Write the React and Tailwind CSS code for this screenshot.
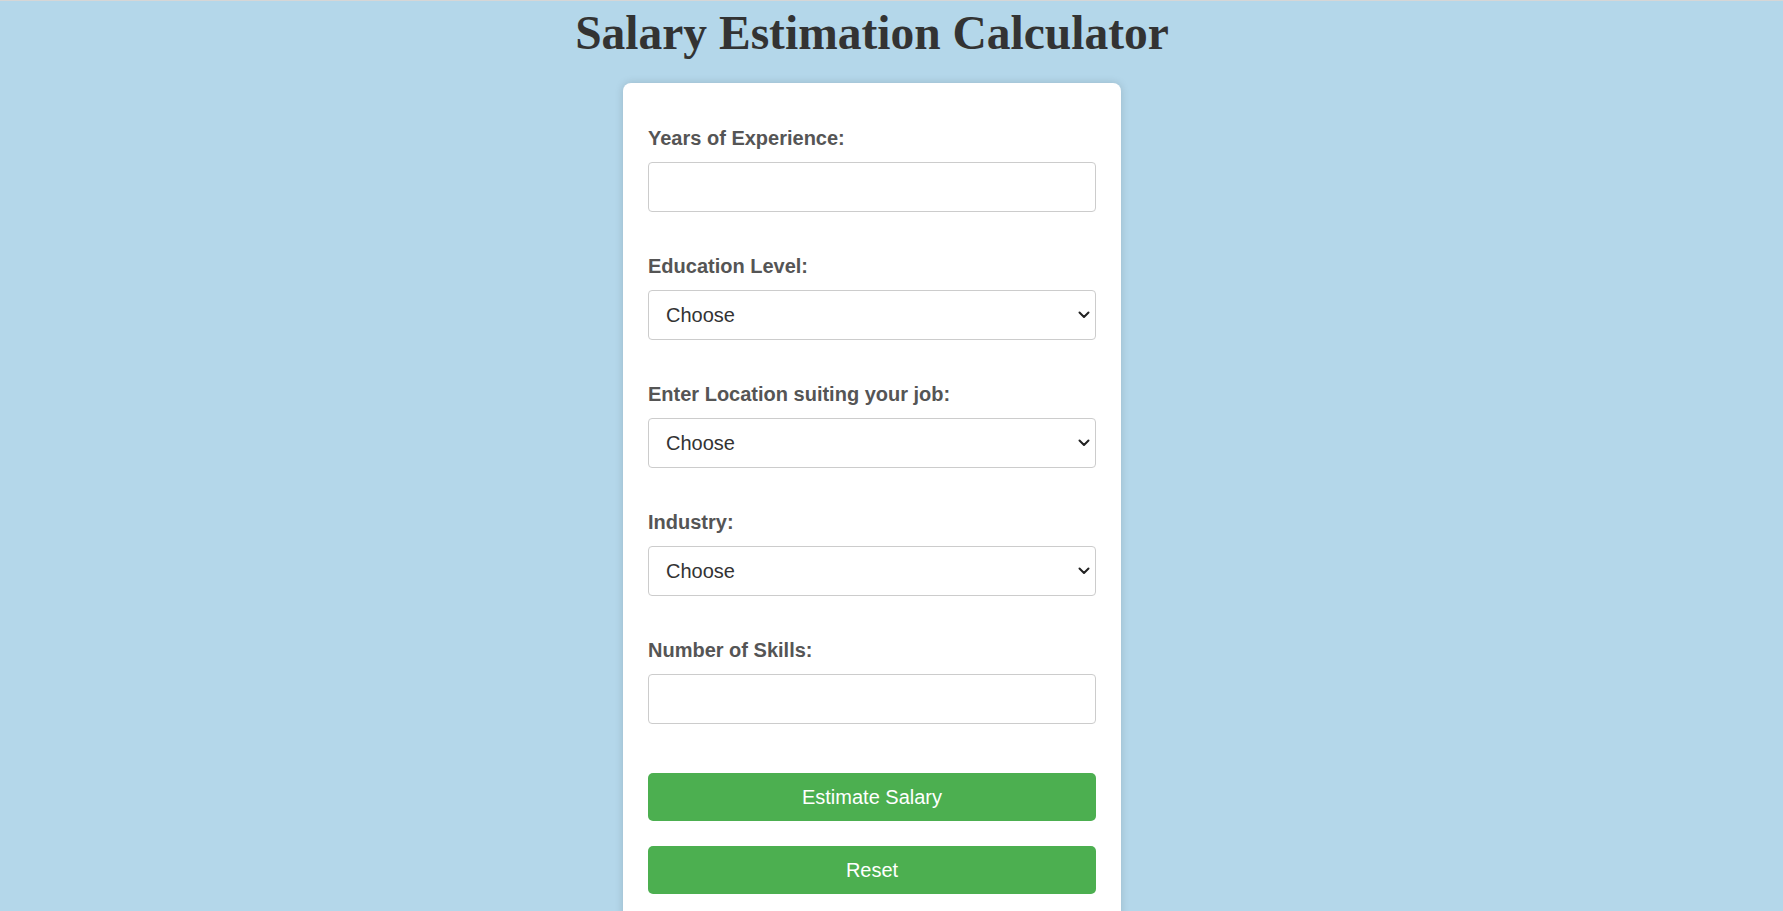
import React from 'react';

const fields = [
    { label: 'Years of Experience:', kind: 'input' },
    { label: 'Education Level:', kind: 'select' },
    { label: 'Enter Location suiting your job:', kind: 'select' },
    { label: 'Industry:', kind: 'select' },
    { label: 'Number of Skills:', kind: 'input' },
];

const Chevron = () => (
    <svg width="12" height="8" viewBox="0 0 12 8" className="pointer-events-none absolute right-[6px] top-1/2 -translate-y-1/2">
        <path d="M1.5 1.5 L6 6 L10.5 1.5" fill="none" stroke="#222" strokeWidth="2" strokeLinecap="round" strokeLinejoin="round" />
    </svg>
);

export default function App() {
    return (
        <div className="min-h-[911px] bg-[#b4d7ea] border-t border-[#d6d6d6] font-['Liberation_Sans',Arial,sans-serif]">
            <div className="flex flex-col items-center pr-[39px]">
                {/* Title */}
                <h1 className="font-['Liberation_Serif','Times_New_Roman',serif] font-bold text-[47.5px] leading-[54px] text-[#333] mt-[5px]">
                    Salary Estimation Calculator
                </h1>

                {/* Form card */}
                <div className="mt-[23px] w-[498px] bg-white rounded-[8px] shadow-[0_0_8px_rgba(0,0,0,0.15)] px-[25px] pt-[44px] pb-[30px]">
                    {fields.map((f, i) => (
                        <div key={f.label} className={i === fields.length - 1 ? 'mb-[49px]' : 'mb-[43px]'}>
                            <label className="block text-[20px] leading-[23px] font-bold text-[#555] mb-[12px]">{f.label}</label>
                            {f.kind === 'input' ? (
                                <input type="text" className="block w-full h-[50px] border border-[#ccc] rounded-[4px] px-[17px] text-[20px] text-[#333] outline-none bg-white" />
                            ) : (
                                <div className="relative">
                                    <select className="block w-full h-[50px] appearance-none border border-[#ccc] rounded-[4px] pl-[17px] pr-[30px] text-[20px] text-[#333] bg-white outline-none">
                                        <option>Choose</option>
                                    </select>
                                    <Chevron />
                                </div>
                            )}
                        </div>
                    ))}

                    <button className="block w-full h-[48px] rounded-[5px] bg-[#4caf50] text-white text-[20px]">
                        Estimate Salary
                    </button>
                    <button className="block w-full h-[48px] rounded-[5px] bg-[#4caf50] text-white text-[20px] mt-[25px]">
                        Reset
                    </button>
                </div>
            </div>
        </div>
    );
}
